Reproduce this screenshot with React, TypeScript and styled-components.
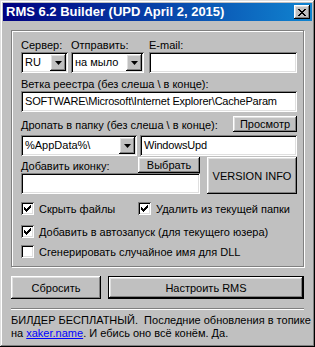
import React from "react";
import styled, { createGlobalStyle, css } from "styled-components";

const Global = createGlobalStyle`
  html, body { margin: 0; padding: 0; background: #c0c0c0; }
  body {
    font-family: "Liberation Sans", Arial, sans-serif;
    font-size: 11px;
    color: #000;
  }
  * { box-sizing: border-box; }
`;

const raised = css`
  background: #c0c0c0;
  box-shadow: inset -1px -1px #000, inset 1px 1px #fff, inset -2px -2px #808080,
    inset 2px 2px #dfdfdf;
`;

const sunken = css`
  background: #fff;
  box-shadow: inset 1px 1px #808080, inset -1px -1px #fff, inset 2px 2px #000,
    inset -2px -2px #dfdfdf;
`;

const Window = styled.div`
  width: 315px;
  height: 347px;
  padding: 3px;
  background: #c0c0c0;
  box-shadow: inset -1px -1px #000, inset 1px 1px #dfdfdf, inset -2px -2px #808080,
    inset 2px 2px #fff;
  display: flex;
  flex-direction: column;
`;

const TitleBar = styled.div`
  height: 18px;
  flex: none;
  background: linear-gradient(90deg, #000080, #1084d0);
  display: flex;
  align-items: center;
  justify-content: space-between;
  padding: 0 2px 0 3px;
`;

const TitleText = styled.span`
  color: #fff;
  font-weight: bold;
  font-size: 13px;
  line-height: 18px;
  white-space: nowrap;
`;

const CloseButton = styled.div`
  ${raised};
  width: 16px;
  height: 14px;
  display: flex;
  align-items: center;
  justify-content: center;
`;

const Body = styled.div`
  padding: 9px 8px 0 8px;
  display: flex;
  flex-direction: column;
`;

const GroupBox = styled.div`
  height: 237px;
  flex: none;
  border: 1px solid #808080;
  box-shadow: inset 1px 1px #fff, 1px 1px #fff;
  padding: 8px 6px 0 9px;
  display: flex;
  flex-direction: column;
`;

const Row = styled.div<{ $mt?: number; $gap?: number }>`
  display: flex;
  align-items: flex-start;
  gap: ${(p) => p.$gap ?? 0}px;
  margin-top: ${(p) => p.$mt ?? 0}px;
`;

const Column = styled.div<{ $w?: number; $ml?: number }>`
  display: flex;
  flex-direction: column;
  width: ${(p) => (p.$w ? `${p.$w}px` : "auto")};
  flex: ${(p) => (p.$w ? "none" : "1")};
  margin-left: ${(p) => p.$ml ?? 0}px;
`;

const FieldGroup = styled.div<{ $mt: number }>`
  display: flex;
  flex-direction: column;
  flex: none;
  margin-top: ${(p) => p.$mt}px;
`;

const Label = styled.div`
  height: 13px;
  line-height: 13px;
  white-space: nowrap;
`;

const Field = styled.div`
  ${sunken};
  height: 21px;
  width: 100%;
  padding: 0 4px;
  line-height: 21px;
  letter-spacing: -0.2px;
  white-space: nowrap;
  overflow: hidden;
`;

const ComboBox = styled.div<{ $w: number }>`
  ${sunken};
  height: 21px;
  width: ${(p) => p.$w}px;
  flex: none;
  padding: 2px 2px 2px 4px;
  display: flex;
  align-items: center;
  justify-content: space-between;
`;

const ComboText = styled.span`
  line-height: 17px;
  white-space: nowrap;
`;

const DropButton = styled.div`
  ${raised};
  width: 16px;
  height: 17px;
  flex: none;
  display: flex;
  align-items: center;
  justify-content: center;
`;

const Button = styled.div<{ $w?: number; $h: number; $default?: boolean }>`
  ${raised};
  width: ${(p) => (p.$w ? `${p.$w}px` : "auto")};
  flex: ${(p) => (p.$w ? "none" : "1")};
  height: ${(p) => p.$h}px;
  display: flex;
  align-items: center;
  justify-content: center;
  white-space: nowrap;
  ${(p) =>
    p.$default &&
    css`
      box-shadow: inset 0 0 0 1px #000, inset -2px -2px #000, inset 2px 2px #fff,
        inset -3px -3px #808080, inset 3px 3px #dfdfdf;
    `}
`;

const HeaderRow = styled.div<{ $mt?: number }>`
  display: flex;
  align-items: flex-end;
  justify-content: space-between;
  flex: none;
  margin-top: ${(p) => p.$mt ?? 0}px;
`;

const CheckRow = styled.div<{ $mt: number }>`
  display: flex;
  flex: none;
  margin-top: ${(p) => p.$mt}px;
`;

const CheckItem = styled.div<{ $w?: number }>`
  display: flex;
  align-items: center;
  gap: 5px;
  height: 13px;
  width: ${(p) => (p.$w ? `${p.$w}px` : "auto")};
  white-space: nowrap;
`;

const Box = styled.div`
  ${sunken};
  width: 13px;
  height: 13px;
  flex: none;
  display: flex;
  align-items: center;
  justify-content: center;
`;

const ButtonRow = styled.div`
  display: flex;
  gap: 7px;
  margin-top: 9px;
`;

const Separator = styled.div`
  height: 2px;
  margin-top: 9px;
  border-top: 1px solid #808080;
  border-bottom: 1px solid #fff;
`;

const Footer = styled.div`
  margin-top: 4px;
  line-height: 13px;
  white-space: nowrap;
`;

const Link = styled.span`
  color: #0000ff;
  text-decoration: underline;
`;

const Arrow = () => (
  <svg width="7" height="4" viewBox="0 0 7 4">
    <path d="M0 0H7L3.5 4Z" fill="#000" />
  </svg>
);

const Check = ({ on }: { on: boolean }) => (
  <Box>
    {on && (
      <svg width="7" height="7" viewBox="0 0 7 7">
        <path
          d="M0 2h1v1h1v1h1V3h1V2h1V1h1V0h1v3H6v1H5v1H4v1H3v1H2V6H1V5H0Z"
          fill="#000"
        />
      </svg>
    )}
  </Box>
);

const Combo = ({ w, text }: { w: number; text: string }) => (
  <ComboBox $w={w}>
    <ComboText>{text}</ComboText>
    <DropButton>
      <Arrow />
    </DropButton>
  </ComboBox>
);

export default function App() {
  return (
    <>
      <Global />
      <Window>
        <TitleBar>
          <TitleText>RMS 6.2 Builder (UPD April 2, 2015)</TitleText>
          <CloseButton>
            <svg width="8" height="7" viewBox="0 0 8 7">
              <path
                d="M0 0h2v1h1v1h2V1h1V0h2v1H7v1H6v1H5v1h1v1h1v1h1v1H6V6H5V5H3v1H2v1H0V6h1V5h1V4h1V3H2V2H1V1H0Z"
                fill="#000"
              />
            </svg>
          </CloseButton>
        </TitleBar>
        <Body>
          <GroupBox>
            <Row>
              <Column $w={47}>
                <Label>Сервер:</Label>
                <Combo w={47} text="RU" />
              </Column>
              <Column $w={73} $ml={3}>
                <Label>Отправить:</Label>
                <Combo w={73} text="на мыло" />
              </Column>
              <Column $ml={5}>
                <Label>E-mail:</Label>
                <Field />
              </Column>
            </Row>
            <FieldGroup $mt={5}>
              <Label>Ветка реестра (без слеша \ в конце):</Label>
              <Field>SOFTWARE\Microsoft\Internet Explorer\CacheParam</Field>
            </FieldGroup>
            <HeaderRow $mt={4}>
              <Label>Дропать в папку (без слеша \ в конце):</Label>
              <Button $w={64} $h={16}>
                Просмотр
              </Button>
            </HeaderRow>
            <Row $mt={3} $gap={3}>
              <Combo w={116} text="%AppData%\" />
              <Field>WindowsUpd</Field>
            </Row>
            <Row $mt={1} $gap={7}>
              <Column $w={179}>
                <HeaderRow>
                  <Label>Добавить иконку:</Label>
                  <Button $w={62} $h={16}>
                    Выбрать
                  </Button>
                </HeaderRow>
                <Field />
              </Column>
              <Button $h={37}>VERSION INFO</Button>
            </Row>
            <CheckRow $mt={8}>
              <CheckItem $w={117}>
                <Check on />
                Скрыть файлы
              </CheckItem>
              <CheckItem>
                <Check on />
                Удалить из текущей папки
              </CheckItem>
            </CheckRow>
            <CheckRow $mt={10}>
              <CheckItem>
                <Check on />
                Добавить в автозапуск (для текущего юзера)
              </CheckItem>
            </CheckRow>
            <CheckRow $mt={7}>
              <CheckItem>
                <Check on={false} />
                Сгенерировать случайное имя для DLL
              </CheckItem>
            </CheckRow>
          </GroupBox>
          <ButtonRow>
            <Button $w={90} $h={23}>
              Сбросить
            </Button>
            <Button $h={23} $default>
              Настроить RMS
            </Button>
          </ButtonRow>
          <Separator />
          <Footer>
            БИЛДЕР БЕСПЛАТНЫЙ.&nbsp; Последние обновления в топике
            <br />
            на <Link>xaker.name</Link>. И ебись оно всё конём. Да.
          </Footer>
        </Body>
      </Window>
    </>
  );
}
